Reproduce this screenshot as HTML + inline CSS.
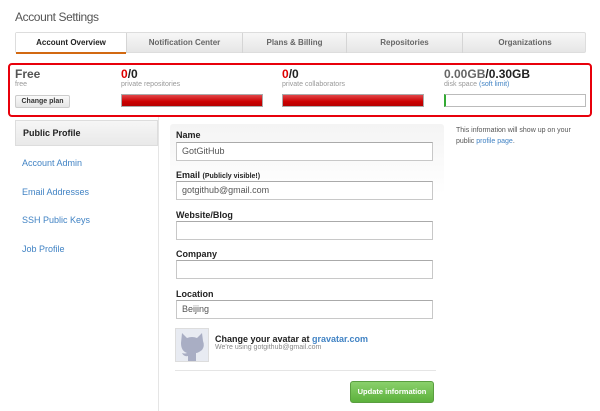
<!DOCTYPE html>
<html><head><style>
*{box-sizing:border-box;margin:0;padding:0}
body{width:600px;height:411px;background:#fff;font-family:"Liberation Sans",sans-serif;position:relative;overflow:hidden;color:#333}
.a{position:absolute}
.tabs{left:15px;top:32px;width:571px;height:21px;background:linear-gradient(#f7f7f7,#e6e6e6);border:1px solid #ddd;border-radius:2px}
.tab{position:absolute;top:0;height:20px;font-size:8px;font-weight:bold;color:#666;text-align:center;line-height:20px;border-left:1px solid #d5d5d5}
.lbl{font-size:9px;font-weight:bold;color:#222;left:176px}
.inp{left:176px;width:257px;height:19px;border:1px solid #c8c8c8;border-top-color:#aaa;background:#fff;font-size:9px;color:#555;padding-left:5px;line-height:17px}
.bar{height:13px;background:linear-gradient(#e0464a,#c00 60%,#b50000);border:1px solid #aaa}
.link{left:22px;font-size:9px;color:#4183c4}
</style></head><body>
<div class="a" style="left:15px;top:10px;font-size:12px;color:#555;letter-spacing:-0.4px">Account Settings</div>
<div class="a tabs">
<div class="tab" style="left:0;width:110px;border-left:0;color:#222;background:#fff;border-bottom:2px solid #d26911;height:21px">Account Overview</div>
<div class="tab" style="left:110px;width:116px">Notification Center</div>
<div class="tab" style="left:226px;width:104px">Plans &amp; Billing</div>
<div class="tab" style="left:330px;width:116px">Repositories</div>
<div class="tab" style="left:446px;width:125px">Organizations</div>
</div>
<div class="a" style="left:8px;top:63px;width:584px;height:54px;border:2px solid #e8000b;border-radius:4px"></div>
<div class="a" style="left:15px;top:67px;font-size:12px;font-weight:bold;color:#555">Free</div>
<div class="a" style="left:15px;top:81px;font-size:7px;color:#999">free</div>
<div class="a" style="left:15px;top:95px;width:55px;height:13px;border:1px solid #ccc;border-radius:2px;background:linear-gradient(#fafafa,#e5e5e5);font-size:7px;font-weight:bold;text-align:center;line-height:11px;color:#333">Change plan</div>
<div class="a" style="left:121px;top:67px;font-size:12px;font-weight:bold;color:#222"><span style="color:#d00">0</span>/0</div>
<div class="a" style="left:121px;top:81px;font-size:7px;color:#999">private repositories</div>
<div class="a bar" style="left:121px;top:94px;width:142px"></div>
<div class="a" style="left:282px;top:67px;font-size:12px;font-weight:bold;color:#222"><span style="color:#d00">0</span>/0</div>
<div class="a" style="left:282px;top:81px;font-size:7px;color:#999">private collaborators</div>
<div class="a bar" style="left:282px;top:94px;width:142px"></div>
<div class="a" style="left:444px;top:67px;font-size:12px;font-weight:bold;color:#222"><span style="color:#666">0.00GB</span>/0.30GB</div>
<div class="a" style="left:444px;top:81px;font-size:7px;color:#999">disk space <span style="color:#4183c4">(soft limit)</span></div>
<div class="a" style="left:444px;top:94px;width:142px;height:13px;border:1px solid #bbb;border-left:2px solid #3a3"></div>

<div class="a" style="left:158px;top:117px;width:1px;height:294px;background:#e5e5e5"></div>
<div class="a" style="left:15px;top:120px;width:143px;height:26px;background:linear-gradient(#f6f6f6,#e9e9e9);border:1px solid #ddd;font-size:9px;font-weight:bold;color:#222;padding-left:7px;line-height:24px">Public Profile</div>
<div class="a link" style="top:158px">Account Admin</div>
<div class="a link" style="top:187px">Email Addresses</div>
<div class="a link" style="top:215px">SSH Public Keys</div>
<div class="a link" style="top:244px">Job Profile</div>

<div class="a" style="left:170px;top:124px;width:274px;height:70px;background:linear-gradient(#f4f4f4,#fff);border-radius:3px"></div>
<div class="a lbl" style="top:130px">Name</div>
<div class="a inp" style="top:142px">GotGitHub</div>
<div class="a lbl" style="top:170px">Email <span style="font-size:7px">(Publicly visible!)</span></div>
<div class="a inp" style="top:181px">gotgithub@gmail.com</div>
<div class="a lbl" style="top:210px">Website/Blog</div>
<div class="a inp" style="top:221px"></div>
<div class="a lbl" style="top:249px">Company</div>
<div class="a inp" style="top:260px"></div>
<div class="a lbl" style="top:289px">Location</div>
<div class="a inp" style="top:300px">Beijing</div>
<div class="a" style="left:175px;top:328px;width:34px;height:34px;border:1px solid #ddd;background:#e8ebf2;overflow:hidden">
<svg width="32" height="32" viewBox="0 0 32 32"><path d="M6 4 L11 9 Q16 7 21 9 L26 4 L27 12 Q29 17 26 21 Q22 24 20 24 L20 32 L12 32 L12 27 Q8 28 6 24 Q9 25 11 24 Q5 22 5 14 Z" fill="#a9aec4"/></svg></div>
<div class="a" style="left:215px;top:334px;font-size:9px;font-weight:bold;color:#222">Change your avatar at <span style="color:#4183c4">gravatar.com</span></div>
<div class="a" style="left:215px;top:344px;font-size:7px;color:#888">We're using gotgithub@gmail.com</div>
<div class="a" style="left:175px;top:370px;width:261px;height:1px;background:#e5e5e5"></div>
<div class="a" style="left:350px;top:381px;width:84px;height:22px;border-radius:3px;background:linear-gradient(#8ad06b,#5cb13c);border:1px solid #5a9e40;color:#fff;font-size:7.5px;font-weight:bold;text-align:center;line-height:20px">Update information</div>
<div class="a" style="left:456px;top:125px;font-size:7px;color:#555;line-height:11px">This information will show up on your<br>public <span style="color:#4183c4">profile page</span>.</div>
</body></html>
